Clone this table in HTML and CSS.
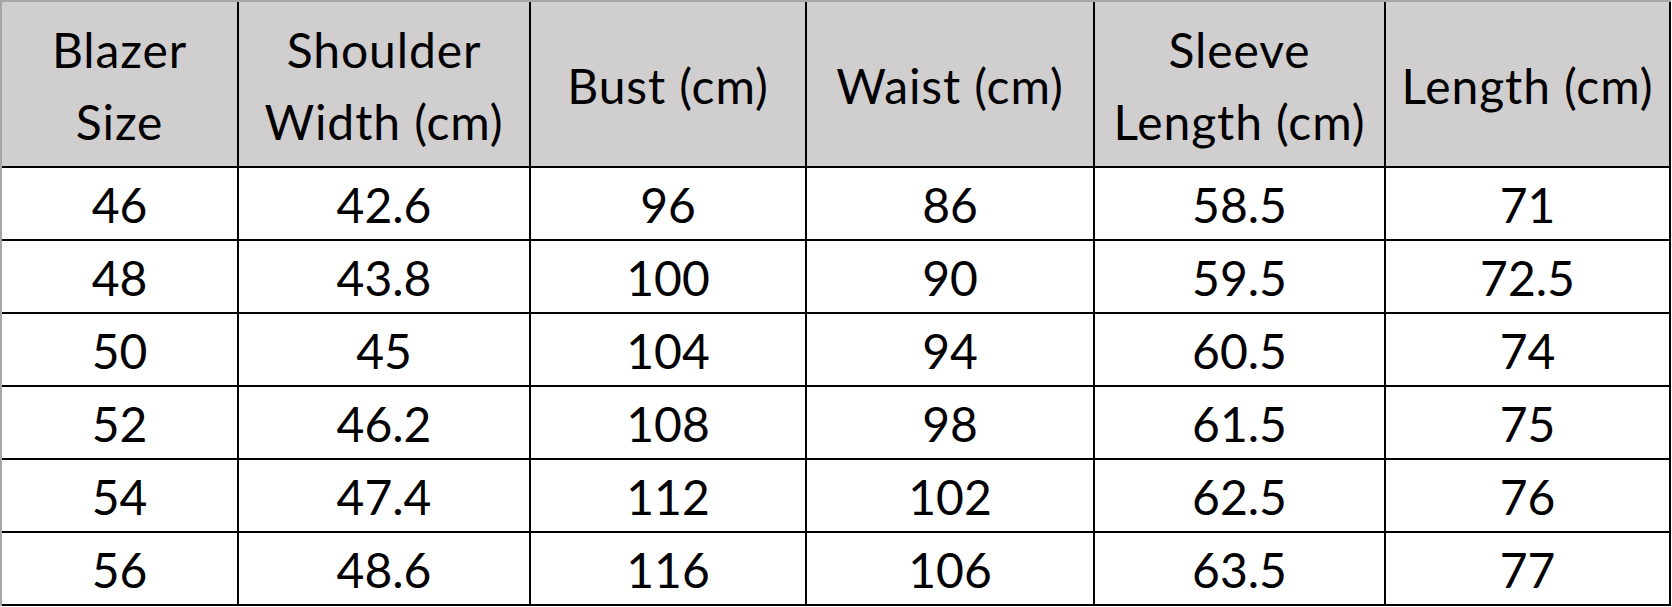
FILE: index.html
```html
<!DOCTYPE html>
<html lang="en">
<head>
<meta charset="utf-8">
<title>Blazer Size Chart</title>
<link rel="stylesheet" href="styles.css">
</head>
<body>
<table class="size-table">
  <colgroup>
    <col class="c1"><col class="c2"><col class="c3"><col class="c4"><col class="c5"><col class="c6">
  </colgroup>
  <thead>
    <tr class="head-row">
      <th>Blazer<br>Size</th>
      <th>Shoulder<br>Width (cm)</th>
      <th>Bust (cm)</th>
      <th>Waist (cm)</th>
      <th>Sleeve<br>Length (cm)</th>
      <th>Length (cm)</th>
    </tr>
  </thead>
  <tbody>
    <tr><td>46</td><td>42.6</td><td>96</td><td>86</td><td>58.5</td><td>71</td></tr>
    <tr><td>48</td><td>43.8</td><td>100</td><td>90</td><td>59.5</td><td>72.5</td></tr>
    <tr><td>50</td><td>45</td><td>104</td><td>94</td><td>60.5</td><td>74</td></tr>
    <tr><td>52</td><td>46.2</td><td>108</td><td>98</td><td>61.5</td><td>75</td></tr>
    <tr><td>54</td><td>47.4</td><td>112</td><td>102</td><td>62.5</td><td>76</td></tr>
    <tr><td>56</td><td>48.6</td><td>116</td><td>106</td><td>63.5</td><td>77</td></tr>
  </tbody>
</table>
</body>
</html>
```
FILE: styles.css
```css
html, body {
  margin: 0;
  padding: 0;
  background: #ffffff;
}

.size-table {
  border-collapse: separate;
  border-spacing: 0;
  table-layout: fixed;
  width: 1671px;
  border-top: 2px solid #a6a6a6;
  border-left: 2px solid #a6a6a6;
  font-family: "Lato", "Liberation Sans", sans-serif;
  font-size: 48px;
  color: #000000;
}

.c1 { width: 237px; }
.c2 { width: 292px; }
.c3 { width: 276px; }
.c4 { width: 288px; }
.c5 { width: 291px; }
.c6 { width: 285px; }

.size-table th,
.size-table td {
  border-right: 2px solid #000000;
  border-bottom: 2px solid #000000;
  text-align: center;
  vertical-align: middle;
  padding: 0;
  font-weight: normal;
  white-space: nowrap;
}

.size-table th {
  background: #d0cece;
  height: 166px;
  box-sizing: border-box;
  line-height: 72px;
  padding-top: 3px;
  letter-spacing: 0.9px;
}

.size-table td {
  height: 73px;
  box-sizing: border-box;
  line-height: 60px;
  padding-top: 3px;
}
```
